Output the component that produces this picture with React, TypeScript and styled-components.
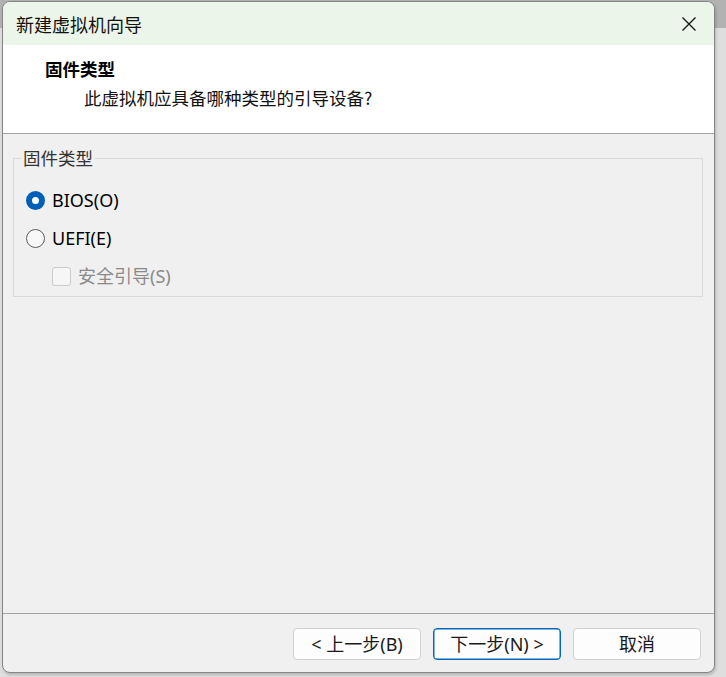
import React from "react";
import styled, { createGlobalStyle } from "styled-components";

const Global = createGlobalStyle`
  html, body { margin: 0; padding: 0; }
  body {
    width: 726px;
    height: 677px;
    overflow: hidden;
    background: linear-gradient(#b2b2b2 0 28px, #dedede 28px);
    font-family: "Noto Sans", "Noto Sans CJK SC", sans-serif;
  }
`;

const Stage = styled.div`
  padding: 1px 0 0 2px;
`;

const Window = styled.div`
  box-sizing: border-box;
  width: 713px;
  height: 672px;
  border: 1px solid #858585;
  border-radius: 8px;
  background: #f0f0f0;
  overflow: hidden;
  display: flex;
  flex-direction: column;
  box-shadow: 1px 2px 3px rgba(0, 0, 0, 0.18);
`;

const TitleBar = styled.div`
  height: 43px;
  flex: none;
  background: #ebf5ea;
  display: flex;
  align-items: center;
  justify-content: space-between;
  padding: 0 14px 0 13px;
`;

const TitleText = styled.div`
  font-family: "Noto Sans CJK SC", sans-serif;
  font-size: 18px;
  color: #111;
  line-height: 24px;
`;

const CloseButton = styled.div`
  width: 20px;
  height: 20px;
  display: flex;
  align-items: center;
  justify-content: center;
  margin-right: 1px;
`;

const Header = styled.div`
  height: 89px;
  flex: none;
  background: #ffffff;
  border-bottom: 1px solid #a4a4a4;
  padding: 12px 0 0 42px;
  box-sizing: border-box;
`;

const HeaderTitle = styled.div`
  font-family: "Noto Sans CJK SC", sans-serif;
  font-weight: 700;
  font-size: 17.5px;
  line-height: 24px;
  color: #000;
`;

const HeaderSub = styled.div`
  font-family: "Noto Sans CJK SC", sans-serif;
  font-size: 17.5px;
  line-height: 24px;
  color: #111;
  margin: 5px 0 0 39px;
`;

const Body = styled.div`
  flex: 1;
  padding: 13px 11px 0 10px;
`;

const Group = styled.fieldset`
  margin: 0;
  padding: 12px 0 1px 0;
  border: 1px solid #d9d9d9;
  border-radius: 0;
  display: flex;
  flex-direction: column;
`;

const Legend = styled.legend`
  font-family: "Noto Sans CJK SC", sans-serif;
  font-size: 17.5px;
  line-height: 22px;
  color: #333;
  padding: 0 2px;
  margin-left: 7px;
`;

const OptionRow = styled.label<{ $indent?: boolean }>`
  height: 38px;
  display: flex;
  align-items: center;
  gap: 7px;
  padding-left: ${(p) => (p.$indent ? "38px" : "12px")};
`;

const RadioDot = styled.span<{ $checked?: boolean }>`
  box-sizing: border-box;
  width: 19px;
  height: 19px;
  border-radius: 50%;
  flex: none;
  background: ${(p) => (p.$checked ? "#ffffff" : "#f8f8f8")};
  border: ${(p) => (p.$checked ? "6px solid #005fb8" : "1px solid #5c5c5c")};
`;

const CheckBox = styled.span`
  box-sizing: border-box;
  width: 19px;
  height: 19px;
  flex: none;
  border-radius: 3px;
  border: 1px solid #cbcbcb;
  background: #f6f6f6;
`;

const OptionText = styled.span<{ $disabled?: boolean }>`
  font-family: "Noto Sans", "Noto Sans CJK SC", sans-serif;
  font-size: 18px;
  line-height: 24px;
  color: ${(p) => (p.$disabled ? "#8a8a8a" : "#000")};
`;

const Footer = styled.div`
  height: 59px;
  flex: none;
  border-top: 1px solid #a4a4a4;
  box-sizing: border-box;
  display: flex;
  justify-content: flex-end;
  align-items: flex-start;
  gap: 12px;
  padding: 14px 13px 0 0;
`;

const Button = styled.button<{ $primary?: boolean }>`
  box-sizing: border-box;
  width: 128px;
  height: 32px;
  border-radius: 4px;
  background: #fdfdfd;
  border: 1px solid ${(p) => (p.$primary ? "#0067c0" : "#d0d0d0")};
  box-shadow: ${(p) => (p.$primary ? "inset 0 0 0 0.5px #0067c0" : "none")};
  font-family: "Noto Sans", "Noto Sans CJK SC", sans-serif;
  font-size: 18px;
  line-height: 22px;
  color: #1a1a1a;
  padding: 0;
  display: flex;
  align-items: center;
  justify-content: center;
`;

export default function App() {
  return (
    <>
      <Global />
      <Stage>
        <Window>
          <TitleBar>
            <TitleText>新建虚拟机向导</TitleText>
            <CloseButton>
              <svg width="16" height="16" viewBox="0 0 16 16">
                <path d="M1.5 1.5 L14.5 14.5 M14.5 1.5 L1.5 14.5" stroke="#1a1a1a" strokeWidth="1.4" fill="none" />
              </svg>
            </CloseButton>
          </TitleBar>
          <Header>
            <HeaderTitle>固件类型</HeaderTitle>
            <HeaderSub>此虚拟机应具备哪种类型的引导设备?</HeaderSub>
          </Header>
          <Body>
            <Group>
              <Legend>固件类型</Legend>
              <OptionRow>
                <RadioDot $checked />
                <OptionText>BIOS(O)</OptionText>
              </OptionRow>
              <OptionRow>
                <RadioDot />
                <OptionText>UEFI(E)</OptionText>
              </OptionRow>
              <OptionRow $indent>
                <CheckBox />
                <OptionText $disabled>安全引导(S)</OptionText>
              </OptionRow>
            </Group>
          </Body>
          <Footer>
            <Button>&lt; 上一步(B)</Button>
            <Button $primary>下一步(N) &gt;</Button>
            <Button>取消</Button>
          </Footer>
        </Window>
      </Stage>
    </>
  );
}
